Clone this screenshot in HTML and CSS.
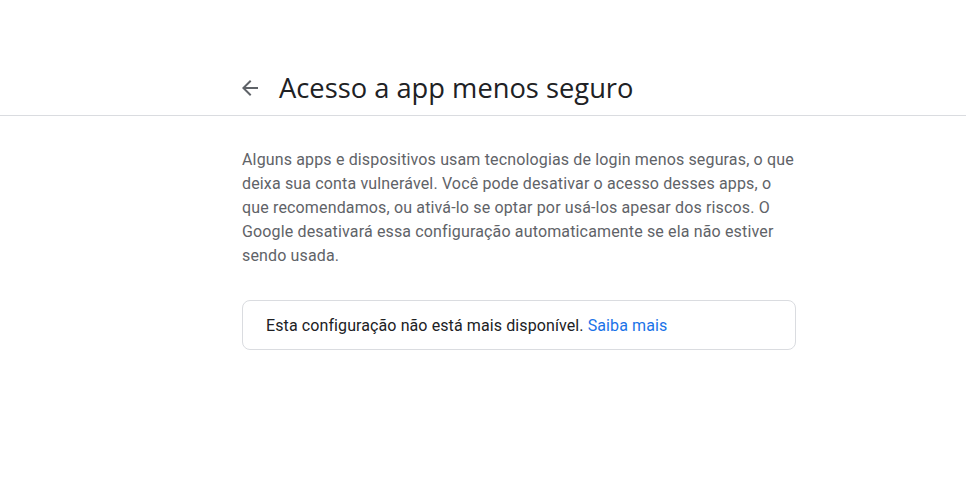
FILE: index.html
```html
<!DOCTYPE html>
<html lang="pt-BR">
<head>
<meta charset="utf-8">
<title>Acesso a app menos seguro</title>
<link rel="stylesheet" href="styles.css">
</head>
<body>
<header class="header">
  <div class="header-inner">
    <button class="back" aria-label="Voltar">
      <svg width="24" height="24" viewBox="0 0 24 24"><path d="M20 11H7.83l5.59-5.59L12 4l-8 8 8 8 1.41-1.41L7.83 13H20v-2z" fill="#5f6368"/></svg>
    </button>
    <h1 class="title">Acesso a app menos seguro</h1>
  </div>
</header>
<main class="content">
  <p class="desc">Alguns apps e dispositivos usam tecnologias de login menos seguras, o que deixa sua conta vulnerável. Você pode desativar o acesso desses apps, o que recomendamos, ou ativá-lo se optar por usá-los apesar dos riscos. O Google desativará essa configuração automaticamente se ela não estiver sendo usada.</p>
  <div class="card">Esta configuração não está mais disponível. <a href="#" class="link">Saiba mais</a></div>
</main>
</body>
</html>
```
FILE: styles.css
```css
html, body { margin: 0; padding: 0; background: #fff; }
body { font-family: Roboto, "Noto Sans", Arial, sans-serif; }
.header { border-bottom: 1px solid #dadce0; padding: 70px 0 9px; }
.header-inner { margin-left: 238px; display: flex; align-items: center; height: 36px; }
.back { border: 0; background: none; padding: 0; width: 24px; height: 24px; margin-right: 17px; display: flex; cursor: pointer; }
.title { margin: 0; font-family: "Open Sans", Roboto, sans-serif; font-weight: 400; font-size: 27.3px; line-height: 36px; color: #202124; }
.content { margin-left: 242px; width: 554px; }
.desc { margin: 32px 0 0; font-size: 16px; line-height: 24px; color: #5f6368; letter-spacing: 0.15px; }
.card { margin-top: 32px; border: 1px solid #dadce0; border-radius: 8px; height: 47px; box-sizing: content-box; padding: 1px 24px 0 23px; display: flex; align-items: center; font-size: 16px; color: #202124; white-space: pre; letter-spacing: 0.1px; }
.link { color: #1a73e8; text-decoration: none; }
```
